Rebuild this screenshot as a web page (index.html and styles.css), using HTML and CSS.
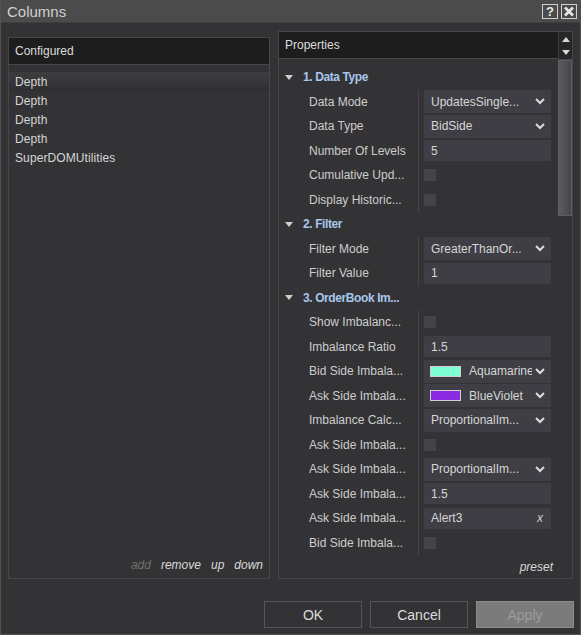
FILE: index.html
```html
<!DOCTYPE html>
<html lang="en">
<head>
    <meta charset="UTF-8">
    <title>Columns</title>
    <link rel="stylesheet" href="styles.css">
</head>
<body>
    <div class="window">
        <div class="titlebar">
            <span class="title">Columns</span>
            <div class="title-btns">
                <span class="tbtn help">?</span>
                <span class="tbtn close">
                    <svg width="12" height="11" viewBox="0 0 12 11"><path d="M2 1.5 L10 9.5 M10 1.5 L2 9.5" stroke="#e6e6e6" stroke-width="2.6"/></svg>
                </span>
            </div>
        </div>

        <div class="content">
            <div class="panel left-panel">
                <div class="panel-head">Configured</div>
                <ul class="col-list">
                    <li class="selected">Depth</li>
                    <li>Depth</li>
                    <li>Depth</li>
                    <li>Depth</li>
                    <li>SuperDOMUtilities</li>
                </ul>
                <div class="list-actions">
                    <span class="off">add</span>
                    <span>remove</span>
                    <span>up</span>
                    <span>down</span>
                </div>
            </div>

            <div class="panel right-panel">
                <div class="props-head">
                    <div class="panel-head">Properties</div>
                    <div class="head-scroll">
                        <svg width="8" height="5" viewBox="0 0 8 5"><path d="M0 5 L4 0 L8 5 Z" fill="#d8d8d8"/></svg>
                        <svg width="8" height="5" viewBox="0 0 8 5"><path d="M0 0 L8 0 L4 5 Z" fill="#d8d8d8"/></svg>
                    </div>
                </div>
                <div class="props-body">
                    <div class="grid">
                        <div class="cat"><span class="arrow"></span>1. Data Type</div>
                        <div class="row"><div class="lbl">Data Mode</div><div class="val"><div class="box select"><span class="txt">UpdatesSingle...</span><svg class="chev" width="10" height="7" viewBox="0 0 10 7"><path d="M1 1 L5 5 L9 1" fill="none" stroke="#dcdcdc" stroke-width="2"/></svg></div></div></div>
                        <div class="row"><div class="lbl">Data Type</div><div class="val"><div class="box select"><span class="txt">BidSide</span><svg class="chev" width="10" height="7" viewBox="0 0 10 7"><path d="M1 1 L5 5 L9 1" fill="none" stroke="#dcdcdc" stroke-width="2"/></svg></div></div></div>
                        <div class="row"><div class="lbl">Number Of Levels</div><div class="val"><div class="box input">5</div></div></div>
                        <div class="row"><div class="lbl">Cumulative Upd...</div><div class="val"><span class="check"></span></div></div>
                        <div class="row"><div class="lbl">Display Historic...</div><div class="val"><span class="check"></span></div></div>

                        <div class="cat"><span class="arrow"></span>2. Filter</div>
                        <div class="row"><div class="lbl">Filter Mode</div><div class="val"><div class="box select"><span class="txt">GreaterThanOr...</span><svg class="chev" width="10" height="7" viewBox="0 0 10 7"><path d="M1 1 L5 5 L9 1" fill="none" stroke="#dcdcdc" stroke-width="2"/></svg></div></div></div>
                        <div class="row"><div class="lbl">Filter Value</div><div class="val"><div class="box input">1</div></div></div>

                        <div class="cat"><span class="arrow"></span>3. OrderBook Im...</div>
                        <div class="row"><div class="lbl">Show Imbalanc...</div><div class="val"><span class="check"></span></div></div>
                        <div class="row"><div class="lbl">Imbalance Ratio</div><div class="val"><div class="box input">1.5</div></div></div>
                        <div class="row"><div class="lbl">Bid Side Imbala...</div><div class="val"><div class="box select"><span class="swatch aqua"></span><span class="txt clip">Aquamarine</span><svg class="chev" width="10" height="7" viewBox="0 0 10 7"><path d="M1 1 L5 5 L9 1" fill="none" stroke="#dcdcdc" stroke-width="2"/></svg></div></div></div>
                        <div class="row"><div class="lbl">Ask Side Imbala...</div><div class="val"><div class="box select"><span class="swatch violet"></span><span class="txt clip">BlueViolet</span><svg class="chev" width="10" height="7" viewBox="0 0 10 7"><path d="M1 1 L5 5 L9 1" fill="none" stroke="#dcdcdc" stroke-width="2"/></svg></div></div></div>
                        <div class="row"><div class="lbl">Imbalance Calc...</div><div class="val"><div class="box select"><span class="txt">ProportionalIm...</span><svg class="chev" width="10" height="7" viewBox="0 0 10 7"><path d="M1 1 L5 5 L9 1" fill="none" stroke="#dcdcdc" stroke-width="2"/></svg></div></div></div>
                        <div class="row"><div class="lbl">Ask Side Imbala...</div><div class="val"><span class="check"></span></div></div>
                        <div class="row"><div class="lbl">Ask Side Imbala...</div><div class="val"><div class="box select"><span class="txt">ProportionalIm...</span><svg class="chev" width="10" height="7" viewBox="0 0 10 7"><path d="M1 1 L5 5 L9 1" fill="none" stroke="#dcdcdc" stroke-width="2"/></svg></div></div></div>
                        <div class="row"><div class="lbl">Ask Side Imbala...</div><div class="val"><div class="box input">1.5</div></div></div>
                        <div class="row"><div class="lbl">Ask Side Imbala...</div><div class="val"><div class="box input"><span class="txt">Alert3</span><span class="clear">x</span></div></div></div>
                        <div class="row"><div class="lbl">Bid Side Imbala...</div><div class="val"><span class="check"></span></div></div>
                    </div>
                    <div class="vscroll"><div class="thumb"></div></div>
                </div>
                <div class="preset">preset</div>
            </div>
        </div>

        <div class="buttons">
            <button class="btn">OK</button>
            <button class="btn">Cancel</button>
            <button class="btn btn-off">Apply</button>
        </div>
    </div>
</body>
</html>
```

FILE: styles.css
```css
* {
    box-sizing: border-box;
}

body {
    margin: 0;
    background: #333335;
    font-family: "Liberation Sans", Arial, sans-serif;
    font-size: 12px;
    color: #d2d2d2;
}

.window {
    width: 581px;
    height: 635px;
    background: #333335;
    border: 1px solid #525252;
    border-top: none;
    display: flex;
    flex-direction: column;
}

.titlebar {
    height: 23px;
    background: #4b4b4b;
    border-bottom: 1px solid #3e3e3e;
    display: flex;
    align-items: center;
    justify-content: space-between;
    padding: 0 3px 0 6px;
}

.title {
    font-size: 15px;
    color: #d0d0d0;
}

.title-btns {
    display: flex;
    gap: 3px;
}

.tbtn {
    width: 16px;
    height: 15px;
    border: 1px solid #cfcfcf;
    display: flex;
    align-items: center;
    justify-content: center;
    font-weight: bold;
    font-size: 13px;
    color: #e8e8e8;
}

.content {
    display: flex;
    align-items: flex-start;
    gap: 8px;
    padding-left: 7px;
    margin-top: 8px;
}

.panel {
    border: 1px solid #474749;
    display: flex;
    flex-direction: column;
}

.panel-head {
    height: 27px;
    background: #1d1d1d;
    border-bottom: 1px solid #474749;
    display: flex;
    align-items: center;
    padding-left: 6px;
    font-size: 12px;
    color: #dcdcdc;
}

.left-panel {
    width: 262px;
    height: 542px;
    margin-top: 6px;
}

.col-list {
    list-style: none;
    margin: 7px 0 0;
    padding: 0;
    flex: 1;
}

.col-list li {
    height: 19px;
    line-height: 20px;
    padding-left: 6px;
    color: #d6d6d6;
    letter-spacing: 0.1px;
}

.col-list .selected {
    background: linear-gradient(#3d3d3f, #2f2f31);
}

.list-actions {
    display: flex;
    justify-content: flex-end;
    gap: 10px;
    padding: 0 6px 6px 0;
    font-style: italic;
    color: #dadada;
}

.list-actions .off {
    color: #707070;
}

.right-panel {
    width: 295px;
    height: 548px;
}

.props-head {
    display: flex;
    height: 28px;
}

.props-head .panel-head {
    flex: 1;
}

.head-scroll {
    width: 14px;
    background: #262628;
    border-bottom: 1px solid #474749;
    border-left: 1px solid #3a3a3c;
    display: flex;
    flex-direction: column;
    align-items: center;
    justify-content: center;
    gap: 8px;
}

.props-body {
    display: flex;
    height: 496px;
    overflow: hidden;
}

.grid {
    width: 279px;
    padding-top: 5px;
}

.cat {
    height: 24.5px;
    display: flex;
    align-items: center;
    padding-left: 6px;
    font-weight: bold;
    letter-spacing: -0.4px;
    color: #a8c6ec;
}

.arrow {
    width: 0;
    height: 0;
    border-left: 4.5px solid transparent;
    border-right: 4.5px solid transparent;
    border-top: 5px solid #cfcfcf;
    margin-right: 10px;
}

.row {
    height: 24.5px;
    display: flex;
}

.lbl {
    width: 140px;
    border-right: 1px solid #454547;
    padding-left: 30px;
    display: flex;
    align-items: center;
    white-space: nowrap;
    color: #cdcdcd;
}

.val {
    flex: 1;
    padding-left: 5px;
    display: flex;
    align-items: center;
}

.box {
    width: 127px;
    background: #3e3e44;
    display: flex;
    align-items: center;
    padding: 0 6px 0 7px;
    color: #d6d6d6;
    white-space: nowrap;
}

.select {
    height: 23px;
}

.input {
    height: 21px;
}

.txt {
    flex: 1;
    overflow: hidden;
}

.clip {
    flex: none;
    width: 63px;
}

.chev {
    margin-left: auto;
    flex-shrink: 0;
}

.swatch {
    width: 31px;
    height: 11px;
    border: 1px solid #d0d0d0;
    margin: 0 8px 0 -1px;
    flex-shrink: 0;
}

.aqua {
    background: #7fffd4;
}

.violet {
    background: #8a2be2;
}

.clear {
    font-style: italic;
    color: #cfcfcf;
    padding-right: 2px;
}

.check {
    width: 12px;
    height: 12px;
    background: #444448;
}

.vscroll {
    width: 14px;
}

.thumb {
    height: 156px;
    background: linear-gradient(90deg, #5c5c5e, #464648);
    border: 1px solid #5e5e60;
}

.preset {
    flex: 1;
    display: flex;
    align-items: center;
    justify-content: flex-end;
    padding-right: 19px;
    font-style: italic;
    color: #d8d8d8;
}

.buttons {
    display: flex;
    justify-content: flex-end;
    gap: 8px;
    padding-right: 6px;
    margin-top: 22px;
}

.btn {
    width: 98px;
    height: 27px;
    background: #333335;
    border: 1px solid #555557;
    color: #dcdcdc;
    font-family: "Liberation Sans", Arial, sans-serif;
    font-size: 14px;
    padding: 0;
}

.btn-off {
    background: #7b7b7b;
    border-color: #8a8a8a;
    color: #9c9c9c;
}
```
